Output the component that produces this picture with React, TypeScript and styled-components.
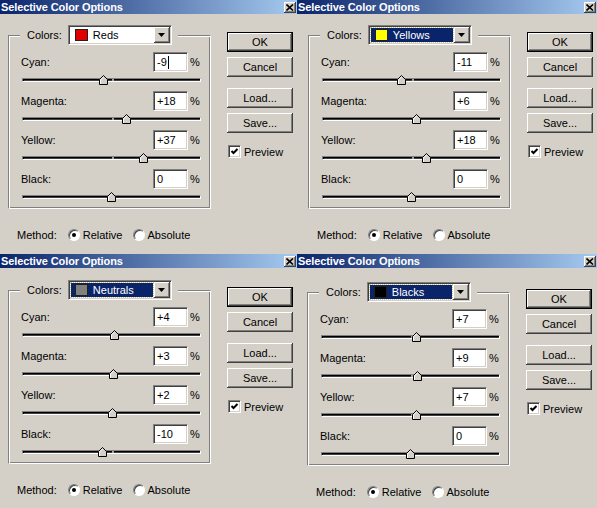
import React from 'react'
import styled, { createGlobalStyle } from 'styled-components'

const GlobalStyle = createGlobalStyle`
  html, body {
    margin: 0;
    padding: 0;
    background: #d4d0c8;
  }
  body {
    font-family: "Liberation Sans", Arial, sans-serif;
    font-size: 11px;
    color: #000;
  }
`

const Screen = styled.div`
  display: grid;
  grid-template-columns: 297px 300px;
  grid-template-rows: 254px 254px;
  width: 597px;
  height: 508px;
  overflow: hidden;
`

const Window = styled.div`
  display: flex;
  flex-direction: column;
  background: #d4d0c8;
  overflow: hidden;
`

const TitleBar = styled.div`
  height: 14px;
  flex: none;
  display: flex;
  align-items: center;
  justify-content: space-between;
  padding: 0 1px 0 1px;
  background: linear-gradient(to right, #0a246a, #a6caf0);
`

const Title = styled.span`
  color: #fff;
  font-weight: bold;
  font-size: 11px;
  letter-spacing: -0.1px;
  line-height: 14px;
`

const CloseButton = styled.div`
  width: 12px;
  height: 11px;
  display: flex;
  align-items: center;
  justify-content: center;
  background: #d4d0c8;
  box-shadow: inset -1px -1px #404040, inset 1px 1px #fff, inset -2px -2px #808080;
`

const Body = styled.div<{ $top: number; $left: number }>`
  display: flex;
  align-items: flex-start;
  padding: ${({ $top }) => $top}px 0 0 ${({ $left }) => $left}px;
`

const MainColumn = styled.div`
  display: flex;
  flex-direction: column;
  width: 203px;
`

const Group = styled.fieldset`
  margin: 0;
  padding: 0 8px 0 12px;
  min-width: 0;
  border: 1px solid;
  border-color: #808080 #fff #fff #808080;
  box-shadow: inset 1px 1px #fff, inset -1px -1px #808080;
`

const Legend = styled.legend`
  display: flex;
  align-items: center;
  margin-left: -1px;
  padding: 0 6px 0 7px;
  background: #d4d0c8;
`

const Caption = styled.span`
  margin-right: 6px;
`

const Select = styled.div`
  width: 104px;
  height: 20px;
  box-sizing: border-box;
  display: flex;
  align-items: center;
  padding: 1px;
  background: #fff;
  border: 1px solid;
  border-color: #808080 #fff #fff #808080;
  box-shadow: inset 1px 1px #404040, inset -1px -1px #d4d0c8;
`

const SelectValue = styled.div<{ $focused: boolean }>`
  flex: 1;
  height: 14px;
  margin: 0 1px 0 1px;
  display: flex;
  align-items: center;
  padding-left: 4px;
  box-sizing: border-box;
  background: ${({ $focused }) => ($focused ? '#0a246a' : '#fff')};
  color: ${({ $focused }) => ($focused ? '#fff' : '#000')};
  outline: ${({ $focused }) => ($focused ? '1px dotted #d0c890' : 'none')};
`

const Swatch = styled.span<{ $color: string }>`
  width: 13px;
  height: 12px;
  box-sizing: border-box;
  margin-right: 5px;
  background: ${({ $color }) => $color};
  border: 1px solid #202020;
`

const DropButton = styled.div`
  width: 16px;
  height: 16px;
  flex: none;
  display: flex;
  align-items: center;
  justify-content: center;
  background: #d4d0c8;
  box-shadow: inset -1px -1px #404040, inset 1px 1px #fff, inset -2px -2px #808080;
`

const Fields = styled.div`
  display: flex;
  flex-direction: column;
  padding-top: 7px;
`

const FieldHead = styled.div`
  display: flex;
  align-items: center;
  height: 20px;
`

const Label = styled.span`
  flex: 1;
`

const NumberBox = styled.div`
  width: 35px;
  height: 20px;
  box-sizing: border-box;
  display: flex;
  align-items: center;
  padding-left: 3px;
  background: #fff;
  border: 1px solid;
  border-color: #808080 #fff #fff #808080;
  box-shadow: inset 1px 1px #404040, inset -1px -1px #d4d0c8;
`

const Caret = styled.span`
  width: 1px;
  height: 13px;
  margin-left: 1px;
  background: #000;
`

const Percent = styled.span`
  width: 12px;
  margin-left: 2px;
`

const SliderLine = styled.div`
  height: 19px;
  padding: 6px 1px 0 1px;
  box-sizing: border-box;
`

const Track = styled.div`
  position: relative;
  height: 4px;
  box-sizing: border-box;
  border: 1px solid;
  border-color: #808080 #fff #fff #808080;
  box-shadow: inset 1px 1px #000;
  background: #404040;

  &::after {
    content: '';
    position: absolute;
    left: 50%;
    top: 0;
    width: 2px;
    height: 2px;
    background: #a8a49c;
  }
`

const Thumb = styled.svg`
  position: absolute;
  top: -4px;
  z-index: 1;
`

const MethodRow = styled.div`
  display: flex;
  align-items: center;
  height: 13px;
  margin-top: 19px;
  padding-left: 9px;
`

const MethodLabel = styled.span`
  margin-right: 11px;
`

const Radio = styled.span<{ $checked: boolean }>`
  position: relative;
  width: 12px;
  height: 12px;
  box-sizing: border-box;
  margin-right: 3px;
  border-radius: 50%;
  border: 1px solid;
  border-color: #808080 #fff #fff #808080;
  box-shadow: inset 1px 1px #404040;
  background: #fff;

  &::after {
    content: '';
    display: ${({ $checked }) => ($checked ? 'block' : 'none')};
    position: absolute;
    left: 3px;
    top: 3px;
    width: 4px;
    height: 4px;
    border-radius: 50%;
    background: #000;
  }
`

const RadioText = styled.span`
  margin-right: 10px;
`

const ButtonColumn = styled.div`
  display: flex;
  flex-direction: column;
  margin-left: 16px;
  padding-top: 7px;
`

const Button = styled.div<{ $primary?: boolean; $gap: number }>`
  width: 66px;
  height: 20px;
  box-sizing: border-box;
  margin-top: ${({ $gap }) => $gap}px;
  display: flex;
  align-items: center;
  justify-content: center;
  background: #d4d0c8;
  border: ${({ $primary }) => ($primary ? '1px solid #000' : 'none')};
  box-shadow: inset -1px -1px #404040, inset 1px 1px #fff, inset -2px -2px #808080;
`

const CheckRow = styled.div`
  display: flex;
  align-items: center;
  margin-top: 12px;
  padding-left: 1px;
`

const CheckBox = styled.span`
  width: 13px;
  height: 13px;
  box-sizing: border-box;
  margin-right: 3px;
  display: flex;
  align-items: center;
  justify-content: center;
  background: #fff;
  border: 1px solid;
  border-color: #808080 #fff #fff #808080;
  box-shadow: inset 1px 1px #404040, inset -1px -1px #d4d0c8;
`

type DialogData = {
  color: string
  swatch: string
  focused: boolean
  values: string[]
  caret?: boolean
  top: number
  left: number
}

const channels = ['Cyan', 'Magenta', 'Yellow', 'Black']

const dialogs: DialogData[] = [
  { color: 'Reds', swatch: '#e00000', focused: false, values: ['-9', '+18', '+37', '0'], caret: true, top: 11, left: 8 },
  { color: 'Yellows', swatch: '#ffff00', focused: true, values: ['-11', '+6', '+18', '0'], top: 11, left: 11 },
  { color: 'Neutrals', swatch: '#808080', focused: true, values: ['+4', '+3', '+2', '-10'], top: 12, left: 8 },
  { color: 'Blacks', swatch: '#000000', focused: true, values: ['+7', '+9', '+7', '0'], top: 14, left: 10 },
]

const Slider = ({ value }: { value: number }) => {
  const pct = ((value + 100) / 200) * 100
  return (
    <SliderLine>
      <Track>
        <Thumb width="9" height="10" viewBox="0 0 9 10" style={{ left: `calc(${pct}% - 5px)` }}>
          <polygon points="0.5,9.5 0.5,4.5 4.5,0.5 8.5,4.5 8.5,9.5" fill="#d4d0c8" stroke="#000" />
          <polyline points="1.5,9 1.5,4.9 4.5,1.9" fill="none" stroke="#fff" />
        </Thumb>
      </Track>
    </SliderLine>
  )
}

const Dialog = ({ data }: { data: DialogData }) => (
  <Window>
    <TitleBar>
      <Title>Selective Color Options</Title>
      <CloseButton>
        <svg width="8" height="7" viewBox="0 0 8 7">
          <path d="M0.5 0.5 L7 6.5 M7 0.5 L0.5 6.5" stroke="#000" strokeWidth="1.6" />
        </svg>
      </CloseButton>
    </TitleBar>
    <Body $top={data.top} $left={data.left}>
      <MainColumn>
        <Group>
          <Legend>
            <Caption>Colors:</Caption>
            <Select>
              <SelectValue $focused={data.focused}>
                <Swatch $color={data.swatch} />
                {data.color}
              </SelectValue>
              <DropButton>
                <svg width="7" height="4" viewBox="0 0 7 4">
                  <polygon points="0,0 7,0 3.5,4" fill="#000" />
                </svg>
              </DropButton>
            </Select>
          </Legend>
          <Fields>
            {channels.map((name, i) => (
              <div key={name}>
                <FieldHead>
                  <Label>{name}:</Label>
                  <NumberBox>
                    {data.values[i]}
                    {data.caret && i === 0 && <Caret />}
                  </NumberBox>
                  <Percent>%</Percent>
                </FieldHead>
                <Slider value={Number(data.values[i])} />
              </div>
            ))}
          </Fields>
        </Group>
        <MethodRow>
          <MethodLabel>Method:</MethodLabel>
          <Radio $checked />
          <RadioText>Relative</RadioText>
          <Radio $checked={false} />
          <RadioText>Absolute</RadioText>
        </MethodRow>
      </MainColumn>
      <ButtonColumn>
        <Button $primary $gap={0}>OK</Button>
        <Button $gap={5}>Cancel</Button>
        <Button $gap={11}>Load...</Button>
        <Button $gap={5}>Save...</Button>
        <CheckRow>
          <CheckBox>
            <svg width="9" height="9" viewBox="0 0 9 9">
              <polyline points="1.5,4 3.5,6 7.5,2" fill="none" stroke="#000" strokeWidth="2" />
            </svg>
          </CheckBox>
          Preview
        </CheckRow>
      </ButtonColumn>
    </Body>
  </Window>
)

const App = () => (
  <>
    <GlobalStyle />
    <Screen>
      {dialogs.map((d) => (
        <Dialog key={d.color} data={d} />
      ))}
    </Screen>
  </>
)

export default App
